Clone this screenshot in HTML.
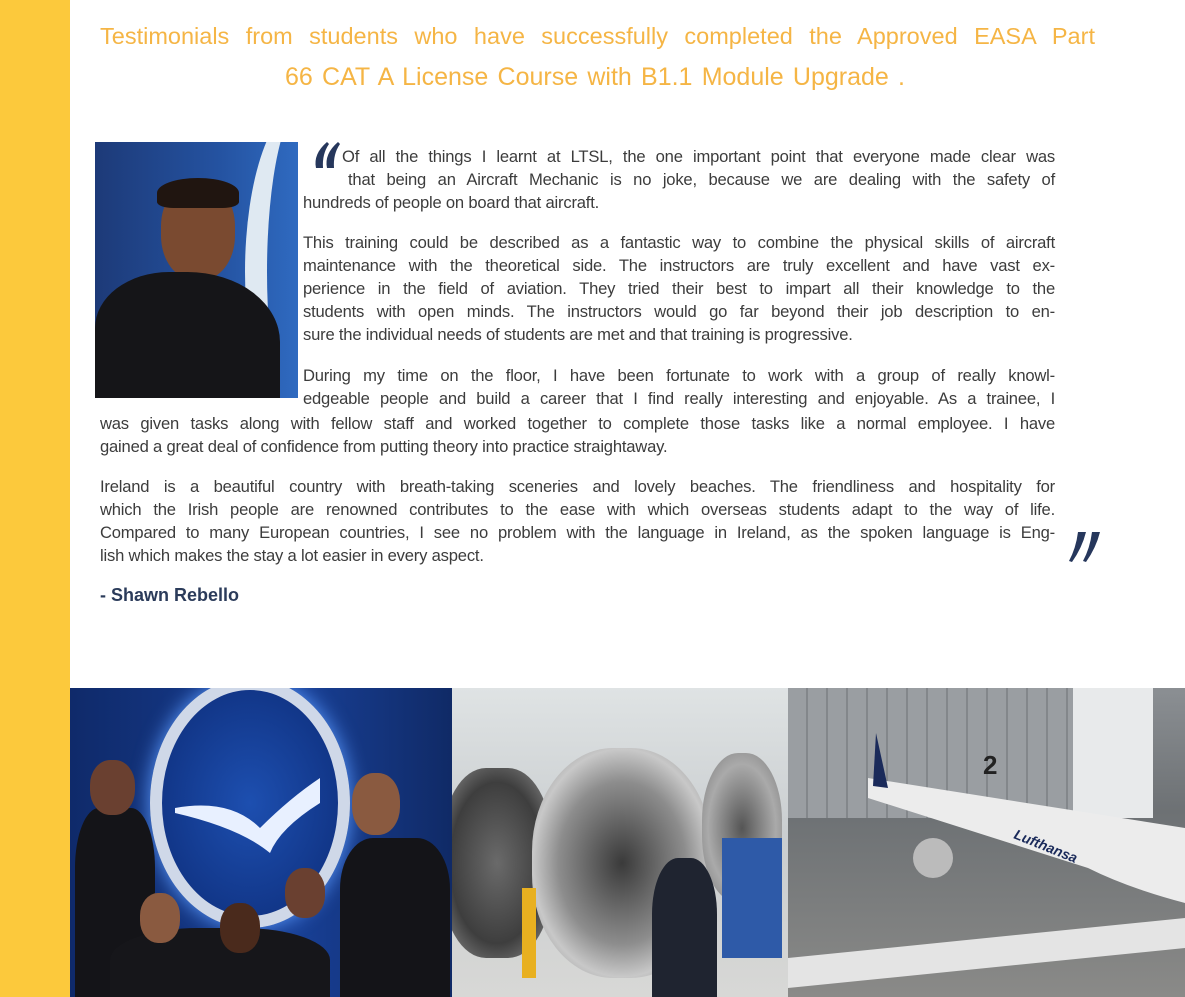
<!DOCTYPE html>
<html><head><meta charset="utf-8"><style>
*{margin:0;padding:0;box-sizing:border-box}
body{width:1185px;height:997px;background:#fff;position:relative;overflow:hidden;font-family:"Liberation Sans",sans-serif;color:#3c3c3c}
.bar{position:absolute;left:0;top:0;width:70px;height:997px;background:#fcc93c}
.t{position:absolute;color:#f5b545;font-size:23.5px;white-space:nowrap}
.l{position:absolute;font-size:16.6px;line-height:20px;white-space:nowrap;letter-spacing:-0.2px}
.j{text-align:justify;text-align-last:justify;white-space:normal}
</style></head><body>
<div class="bar"></div>
<div class="t" style="left:100px;top:23px;width:995px;text-align:justify;text-align-last:justify">Testimonials from students who have successfully completed the Approved EASA Part</div>
<div class="t" style="left:285px;top:63px;width:620px;font-size:25px;text-align:justify;text-align-last:justify">66 CAT A License Course with B1.1 Module Upgrade .</div>

<div style="position:absolute;left:95px;top:142px;width:203px;height:256px;overflow:hidden;background:linear-gradient(90deg,#1d3a78,#2452a0 60%,#2f6ac0)">
 <div style="position:absolute;left:150px;top:-40px;width:120px;height:340px;border-left:22px solid #dfe9f2;border-radius:50%"></div>
 <div style="position:absolute;left:66px;top:40px;width:74px;height:98px;border-radius:45%;background:#7a4a30"></div>
 <div style="position:absolute;left:62px;top:36px;width:82px;height:30px;border-radius:50% 50% 20% 20%;background:#201510"></div>
 <div style="position:absolute;left:0;top:130px;width:185px;height:140px;border-radius:40% 50% 0 0;background:#151518"></div>
</div>

<svg style="position:absolute;left:310px;top:140px" width="32" height="30"><path d="M6 28 Q3 14 17 2 L19 4 Q12 14 13 28Z M17 28 Q14 14 28 2 L30 4 Q23 14 24 28Z" fill="#26375c"/></svg>
<div class="l j" style="left:342px;top:147px;width:713px">Of all the things I learnt at LTSL, the one important point that everyone made clear was</div>
<div class="l j" style="left:348px;top:170px;width:707px">that being an Aircraft Mechanic is no joke, because we are dealing with the safety of</div>
<div class="l" style="left:303px;top:193px">hundreds of people on board that aircraft.</div>
<div class="l j" style="left:303px;top:233px;width:752px">This training could be described as a fantastic way to combine the physical skills of aircraft</div>
<div class="l j" style="left:303px;top:256px;width:752px">maintenance with the theoretical side. The instructors are truly excellent and have vast ex-</div>
<div class="l j" style="left:303px;top:279px;width:752px">perience in the field of aviation. They tried their best to impart all their knowledge to the</div>
<div class="l j" style="left:303px;top:302px;width:752px">students with open minds. The instructors would go far beyond their job description to en-</div>
<div class="l" style="left:303px;top:325px">sure the individual needs of students are met and that training is progressive.</div>
<div class="l j" style="left:303px;top:366px;width:752px">During my time on the floor, I have been fortunate to work with a group of really knowl-</div>
<div class="l j" style="left:303px;top:389px;width:752px">edgeable people and build a career that I find really interesting and enjoyable. As a trainee, I</div>
<div class="l j" style="left:100px;top:414px;width:955px">was given tasks along with fellow staff and worked together to complete those tasks like a normal employee. I have</div>
<div class="l" style="left:100px;top:437px">gained a great deal of confidence from putting theory into practice straightaway.</div>
<div class="l j" style="left:100px;top:477px;width:955px">Ireland is a beautiful country with breath-taking sceneries and lovely beaches. The friendliness and hospitality for</div>
<div class="l j" style="left:100px;top:500px;width:955px">which the Irish people are renowned contributes to the ease with which overseas students adapt to the way of life.</div>
<div class="l j" style="left:100px;top:523px;width:955px">Compared to many European countries, I see no problem with the language in Ireland, as the spoken language is Eng-</div>
<div class="l" style="left:100px;top:546px">lish which makes the stay a lot easier in every aspect.</div>
<svg style="position:absolute;left:1064px;top:530px" width="40" height="34"><path d="M14 2 L22 2 Q18 18 8 32 L5 31 Q12 18 14 2Z M28 2 L36 2 Q32 18 22 32 L19 31 Q26 18 28 2Z" fill="#26375c"/></svg>
<div style="position:absolute;left:100px;top:585px;font-size:18px;font-weight:bold;color:#2b3b5a">- Shawn Rebello</div>

<div style="position:absolute;left:70px;top:688px;width:382px;height:309px;overflow:hidden;background:linear-gradient(90deg,#0f2a6a,#183f95 60%,#102a66)">
 <div style="position:absolute;left:80px;top:-10px;width:200px;height:250px;border-radius:50%;border:12px solid #cfd8e8;background:radial-gradient(#1d4fb0,#0d2c78);box-shadow:0 0 20px #5a9aff"></div>
 <svg style="position:absolute;left:100px;top:70px" width="160" height="100"><path d="M5 50 Q60 40 90 70 Q120 40 150 20 L150 45 Q110 70 100 95 Q70 70 5 55Z" fill="#e8f0ff"/></svg>
 <div style="position:absolute;left:5px;top:120px;width:80px;height:200px;background:#141418;border-radius:30% 30% 0 0"></div>
 <div style="position:absolute;left:20px;top:72px;width:45px;height:55px;background:#6a4030;border-radius:45%"></div>
 <div style="position:absolute;left:270px;top:150px;width:110px;height:170px;background:#141418;border-radius:30% 30% 0 0"></div>
 <div style="position:absolute;left:282px;top:85px;width:48px;height:62px;background:#8a5a40;border-radius:45%"></div>
 <div style="position:absolute;left:40px;top:240px;width:220px;height:80px;background:#16161a;border-radius:40% 40% 0 0"></div>
 <div style="position:absolute;left:70px;top:205px;width:40px;height:50px;background:#8a5a40;border-radius:45%"></div>
 <div style="position:absolute;left:150px;top:215px;width:40px;height:50px;background:#4a2a1c;border-radius:45%"></div>
 <div style="position:absolute;left:215px;top:180px;width:40px;height:50px;background:#6a4030;border-radius:45%"></div>
</div>
<div style="position:absolute;left:452px;top:688px;width:336px;height:309px;overflow:hidden;background:linear-gradient(180deg,#dfe3e4,#c9cdcf 50%,#d8d8d6)">
 <div style="position:absolute;left:-10px;top:80px;width:110px;height:190px;border-radius:40%;background:radial-gradient(#6a6a6a,#3e3e3e 60%,#999)"></div>
 <div style="position:absolute;left:80px;top:60px;width:180px;height:230px;border-radius:45%;background:radial-gradient(#3a3a3a,#8d8d8d 50%,#c8c8c8 70%,#777)"></div>
 <div style="position:absolute;left:250px;top:65px;width:80px;height:150px;border-radius:45%;background:radial-gradient(#555,#aaa 60%,#777)"></div>
 <div style="position:absolute;left:270px;top:150px;width:60px;height:120px;background:#2e5aa8"></div>
 <div style="position:absolute;left:200px;top:170px;width:65px;height:140px;background:#1f2430;border-radius:40% 40% 0 0"></div>
 <div style="position:absolute;left:70px;top:200px;width:14px;height:90px;background:#e8b020"></div>
</div>
<div style="position:absolute;left:788px;top:688px;width:397px;height:309px;overflow:hidden;background:linear-gradient(180deg,#8b8f93,#6d7174 40%,#8a8a88)">
 <div style="position:absolute;left:0;top:0;width:285px;height:130px;background:repeating-linear-gradient(90deg,#9a9ea2 0 18px,#83878b 18px 20px)"></div>
 <div style="position:absolute;left:285px;top:0;width:80px;height:130px;background:#e8eaeb"></div>
 <div style="position:absolute;left:195px;top:62px;font:bold 26px 'Liberation Sans',sans-serif;color:#222">2</div>
 <svg style="position:absolute;left:0;top:0" width="397" height="309"><path d="M80 90 L397 140 L397 215 Q340 200 300 180 L80 110Z" fill="#ececec"/><path d="M88 45 L100 100 L85 98Z" fill="#1a2a5a"/><path d="M0 270 L397 230 L397 260 L0 300Z" fill="#e4e4e4"/><circle cx="145" cy="170" r="20" fill="#bbb"/><text x="225" y="150" transform="rotate(22 225 150)" font-family="Liberation Sans" font-style="italic" font-weight="bold" font-size="14" fill="#1a2a5a">Lufthansa</text></svg>
</div>
</body></html>
